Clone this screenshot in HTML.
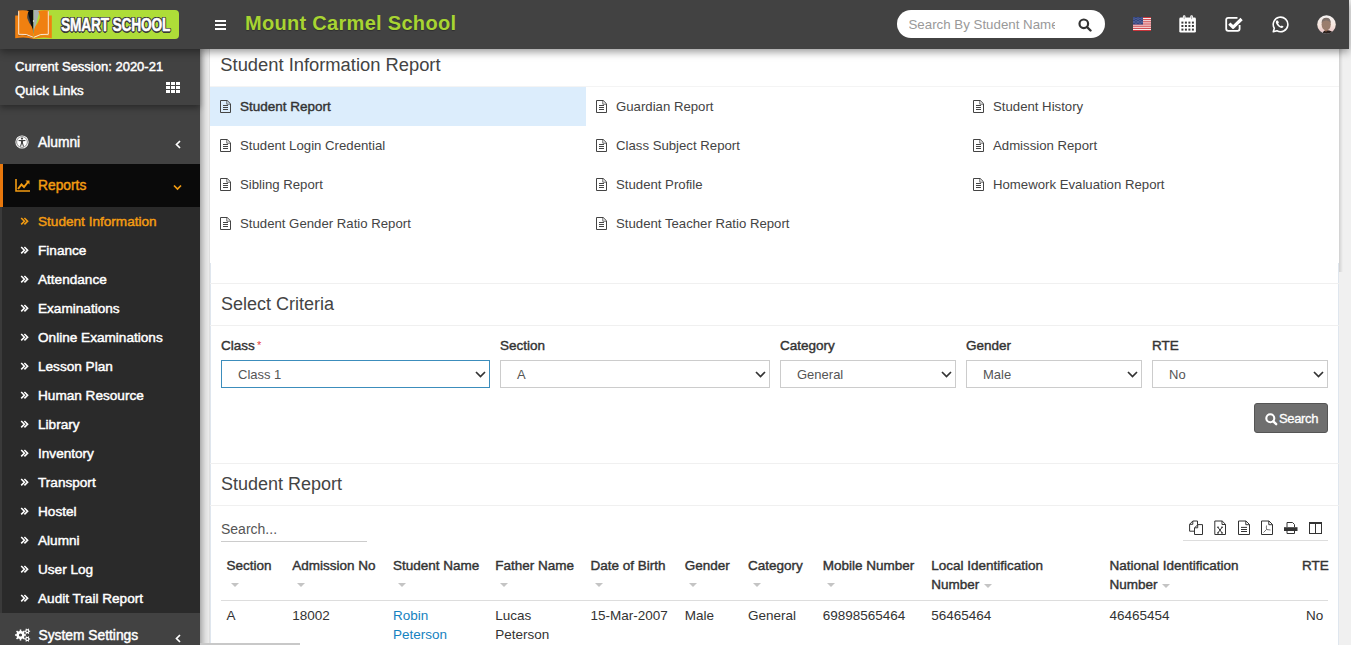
<!DOCTYPE html>
<html><head><meta charset="utf-8">
<style>
*{box-sizing:border-box;margin:0;padding:0}
html,body{width:1351px;height:645px;overflow:hidden}
body{position:relative;background:#f0f0f0;font-family:"Liberation Sans",sans-serif;color:#444}
.a{position:absolute;white-space:nowrap}
#hdr{position:absolute;left:0;top:0;width:1349px;height:49px;background:#424242;box-shadow:0 3px 8px rgba(0,0,0,.4);z-index:5}
#side{position:absolute;left:0;top:49px;width:200px;height:596px;background:#424242;z-index:4}
#content{position:absolute;left:210px;top:49px;width:1129px;height:596px;background:#fff}
.sb{font-size:13px;color:#fff;-webkit-text-stroke-width:.45px}
.sub{font-size:13.6px;color:#fff;-webkit-text-stroke-width:.45px}
.rl{font-size:13.2px;color:#444}
.ttl{font-size:18px;color:#444}
.lbl{font-size:13.5px;color:#333;-webkit-text-stroke-width:.4px}
.sel{position:absolute;top:311px;height:28px;border:1px solid #ccc;background:#fff}
.sel span{position:absolute;left:16px;top:6px;font-size:13px;color:#555}
.sel svg{position:absolute;right:4px;top:9px}
.th{font-size:13.5px;color:#333;-webkit-text-stroke-width:.4px}
.td{font-size:13.5px;color:#333}
.arr{position:absolute;width:0;height:0;border-left:4px solid transparent;border-right:4px solid transparent;border-top:4.5px solid #c4c4c4}
</style></head><body>

<div id="hdr">
  <!-- logo -->
  <div class="a" style="left:33px;top:10px;width:146px;height:29px;background:#aedd38;border-radius:0 4px 4px 0"></div>
  <svg class="a" style="left:15px;top:10px" width="37" height="29" viewBox="0 0 36.6 29">
    <path d="M12 0 H18.3 V24 Z" fill="#0d0d0d"/>
    <path d="M18.3 0 H24.6 L18.3 24 Z" fill="#a8b2b2"/>
    <circle cx="18.3" cy="11" r=".7" fill="#fff"/>
    <g id="lp">
    <path d="M0 5.5 L3 5.5 L3 25.5 Q11 24 18.3 28 L18.3 29 Q10 26.3 0 28.2 Z" fill="#f08010"/>
    <path d="M2.8 0.6 Q9 -0.3 13.5 1 Q11.5 5 12.2 8.5 Q13.5 12.5 16.5 16.5 Q18.3 20 18.3 27.5 Q11 23.8 2.8 25 Z" fill="#f08010"/>
    <path d="M3.5 1.2 V24.3 Q11.5 23.2 18 27.3" fill="none" stroke="#fff" stroke-width=".9" opacity=".9"/>
    </g>
    <g transform="translate(36.6 0) scale(-1 1)">
    <path d="M0 5.5 L3 5.5 L3 25.5 Q11 24 18.3 28 L18.3 29 Q10 26.3 0 28.2 Z" fill="#f08010"/>
    <path d="M2.8 0.6 Q9 -0.3 13.5 1 Q11.5 5 12.2 8.5 Q13.5 12.5 16.5 16.5 Q18.3 20 18.3 27.5 Q11 23.8 2.8 25 Z" fill="#f08010"/>
    <path d="M3.5 1.2 V24.3 Q11.5 23.2 18 27.3" fill="none" stroke="#fff" stroke-width=".9" opacity=".9"/>
    </g>
  </svg>
  <div class="a" style="left:60.5px;top:14px;font-size:19px;font-weight:bold;color:#fff;transform:scaleX(.725);transform-origin:0 0;letter-spacing:-.3px;-webkit-text-stroke:.5px #fff;text-shadow:-1.3px -1px 0 #3a3a3a,1.3px -1px 0 #3a3a3a,-1.3px 1px 0 #3a3a3a,1.3px 1px 0 #3a3a3a,0 1.5px 0 #3a3a3a,0 -1.3px 0 #3a3a3a,1.5px 0 0 #3a3a3a,-1.5px 0 0 #3a3a3a">SMART SCHOOL</div>
  <!-- hamburger -->
  <div class="a" style="left:215px;top:20px;width:11px;height:2px;background:#fff;box-shadow:0 4px 0 #fff,0 8px 0 #fff"></div>
  <div class="a" style="left:245px;top:12px;font-size:20px;font-weight:bold;letter-spacing:.3px;color:#a8d432;text-shadow:0 1px 1px rgba(0,0,0,.3)">Mount Carmel School</div>
  <!-- search -->
  <div class="a" style="left:897px;top:10px;width:208px;height:28px;background:#fff;border-radius:14px"></div>
  <div class="a" style="left:908.5px;top:16.8px;width:146.5px;overflow:hidden;font-size:13.3px;color:#999">Search By Student Name</div>
  <svg class="a" style="left:1078px;top:18px" width="14" height="14" viewBox="0 0 14 14"><circle cx="5.8" cy="5.8" r="4.3" fill="none" stroke="#333" stroke-width="2.2"/><path d="M9 9 L12.5 12.5" stroke="#333" stroke-width="2.4" stroke-linecap="round"/></svg>
  <!-- flag -->
  <svg class="a" style="left:1133px;top:17px" width="18" height="14" viewBox="0 0 18 14">
    <rect width="18" height="14" fill="#fff"/>
    <g fill="#c8343a"><rect y="0" width="18" height="1.1"/><rect y="2.15" width="18" height="1.1"/><rect y="4.3" width="18" height="1.1"/><rect y="6.45" width="18" height="1.1"/><rect y="8.6" width="18" height="1.1"/><rect y="10.75" width="18" height="1.1"/><rect y="12.9" width="18" height="1.1"/></g>
    <rect width="10" height="7.5" fill="#2d3f7c"/><circle cx="1.0" cy="1.0" r=".45" fill="#c8d0e8"/><circle cx="1.0" cy="2.6" r=".45" fill="#c8d0e8"/><circle cx="1.0" cy="4.2" r=".45" fill="#c8d0e8"/><circle cx="1.0" cy="5.8" r=".45" fill="#c8d0e8"/><circle cx="3.0" cy="1.8" r=".45" fill="#c8d0e8"/><circle cx="3.0" cy="3.4" r=".45" fill="#c8d0e8"/><circle cx="3.0" cy="5.0" r=".45" fill="#c8d0e8"/><circle cx="3.0" cy="6.6" r=".45" fill="#c8d0e8"/><circle cx="5.0" cy="1.0" r=".45" fill="#c8d0e8"/><circle cx="5.0" cy="2.6" r=".45" fill="#c8d0e8"/><circle cx="5.0" cy="4.2" r=".45" fill="#c8d0e8"/><circle cx="5.0" cy="5.8" r=".45" fill="#c8d0e8"/><circle cx="7.0" cy="1.8" r=".45" fill="#c8d0e8"/><circle cx="7.0" cy="3.4" r=".45" fill="#c8d0e8"/><circle cx="7.0" cy="5.0" r=".45" fill="#c8d0e8"/><circle cx="7.0" cy="6.6" r=".45" fill="#c8d0e8"/><circle cx="9.0" cy="1.0" r=".45" fill="#c8d0e8"/><circle cx="9.0" cy="2.6" r=".45" fill="#c8d0e8"/><circle cx="9.0" cy="4.2" r=".45" fill="#c8d0e8"/><circle cx="9.0" cy="5.8" r=".45" fill="#c8d0e8"/>
  </svg>
  <!-- calendar -->
  <svg class="a" style="left:1179px;top:15px" width="18" height="18" viewBox="0 0 18 18">
    <rect x="0.3" y="2.6" width="16.6" height="15" rx="1.4" fill="#fff"/>
    <rect x="3.9" y="0.2" width="2.6" height="4.6" rx="1.3" fill="#fff"/>
    <rect x="11.3" y="0.2" width="2.6" height="4.6" rx="1.3" fill="#fff"/>
    <path d="M5.2 1.2 V4.2 M12.6 1.2 V4.2" stroke="#777" stroke-width=".6"/>
    <g fill="#3a3a3a">
      <rect x="2.4" y="6.6" width="2" height="2"/><rect x="5.9" y="6.6" width="2" height="2"/><rect x="9.4" y="6.6" width="2" height="2"/><rect x="12.9" y="6.6" width="2" height="2"/>
      <rect x="2.4" y="10" width="2" height="2"/><rect x="5.9" y="10" width="2" height="2"/><rect x="9.4" y="10" width="2" height="2"/><rect x="12.9" y="10" width="2" height="2"/>
      <rect x="2.4" y="13.6" width="2" height="2"/><rect x="5.9" y="13.6" width="2" height="2"/><rect x="9.4" y="13.6" width="2" height="2"/><rect x="12.9" y="13.6" width="2" height="2"/>
    </g>
  </svg>
  <!-- checkbox -->
  <svg class="a" style="left:1225px;top:16px" width="18" height="16" viewBox="0 0 18 16">
    <path d="M12.5 1.8 H3.2 Q1.2 1.8 1.2 3.8 V12.8 Q1.2 14.8 3.2 14.8 H12.6 Q14.6 14.8 14.6 12.8 V9" fill="none" stroke="#fff" stroke-width="1.8"/>
    <path d="M4.3 7.6 L8.2 11.2 L16.6 3" fill="none" stroke="#fff" stroke-width="3.2" stroke-linejoin="round"/>
  </svg>
  <!-- whatsapp -->
  <svg class="a" style="left:1271px;top:16px" width="18" height="17" viewBox="0 0 18 17">
    <path d="M2.3 15.8 L3.3 12.2 A7.3 7.3 0 1 1 6 14.8 Z" fill="none" stroke="#fff" stroke-width="1.6" stroke-linejoin="round"/>
    <path d="M5.6 4.4 C4.5 5.2 4.6 6.8 5.7 8.5 C6.9 10.3 8.6 11.6 10.5 11.9 C11.6 12 12.4 11.3 12.5 10.5 L10.8 9.4 L9.9 10.2 C8.8 9.8 7.7 8.7 7.1 7.5 L7.9 6.5 L6.9 4.5 Z" fill="#fff"/>
  </svg>
  <!-- avatar -->
  <svg class="a" style="left:1317px;top:14.5px" width="19" height="19" viewBox="0 0 19 19">
    <defs><clipPath id="av"><circle cx="9.5" cy="9.5" r="9.3"/></clipPath>
    <linearGradient id="avg" x1="0" y1="0" x2="0" y2="1"><stop offset="0" stop-color="#f4f2f2"/><stop offset=".55" stop-color="#f6e6de"/><stop offset=".85" stop-color="#eccbcb"/><stop offset="1" stop-color="#c8d4e8"/></linearGradient></defs>
    <g clip-path="url(#av)">
      <rect width="19" height="19" fill="url(#avg)"/>
      <ellipse cx="9.2" cy="9.3" rx="4.6" ry="6.2" fill="#9a7e6e"/>
      <path d="M4.6 8 Q4.6 2.8 9.2 2.8 Q13.8 2.8 13.8 8 Q12.5 5.2 9.2 5.4 Q5.9 5.2 4.6 8 Z" fill="#7e706a"/>
      <path d="M5.5 19 Q6 15.5 9.5 15.2 Q15 15 17 19 Z" fill="#2a201c"/>
      <path d="M7.5 15.5 Q9 17.5 11 15.3 Z" fill="#b07a58"/>
    </g>
  </svg>
</div>

<div id="side">
  <div class="a" style="left:0;top:0;width:200px;height:56px;background:#424242;box-shadow:0 3px 6px rgba(0,0,0,.35)"></div>
  <div class="a sb" style="left:15px;top:10px">Current Session: 2020-21</div>
  <div class="a sb" style="left:15px;top:33.6px;font-size:13.3px">Quick Links</div>
  <svg class="a" style="left:166px;top:33px" width="14" height="11" viewBox="0 0 14 11"><g fill="#fff">
    <rect x="0" y="0" width="4" height="3"/><rect x="5" y="0" width="4" height="3"/><rect x="10" y="0" width="4" height="3"/>
    <rect x="0" y="4" width="4" height="3"/><rect x="5" y="4" width="4" height="3"/><rect x="10" y="4" width="4" height="3"/>
    <rect x="0" y="8" width="4" height="3"/><rect x="5" y="8" width="4" height="3"/><rect x="10" y="8" width="4" height="3"/></g></svg>

  <!-- Alumni -->
  <svg class="a" style="left:15px;top:86px" width="14" height="14" viewBox="0 0 14 14"><circle cx="7" cy="7" r="6.6" fill="#fff"/><circle cx="7" cy="7" r="5.4" fill="none" stroke="#424242" stroke-width=".6"/><circle cx="7" cy="3.6" r="1.1" fill="#424242"/><path d="M3.6 5 L10.4 5 L10.4 6 L8 6.2 L8 8 L9 11.4 L8 11.6 L7 8.6 L6 11.6 L5 11.4 L6 8 L6 6.2 L3.6 6 Z" fill="#424242"/></svg>
  <div class="a sb" style="left:38px;top:85.6px;font-size:13.8px">Alumni</div>
  <svg class="a" style="left:175px;top:91px" width="6" height="9" viewBox="0 0 6 9"><path d="M5 1 L1.5 4.5 L5 8" fill="none" stroke="#fff" stroke-width="1.7"/></svg>

  <!-- Reports -->
  <div class="a" style="left:0;top:115px;width:200px;height:43px;background:#0a0a0a"></div>
  <div class="a" style="left:0;top:115px;width:3px;height:43px;background:#e8780d"></div>
  <svg class="a" style="left:15px;top:130px" width="15" height="13" viewBox="0 0 15 13"><path d="M1 0 L1 12 L15 12" fill="none" stroke="#f39c12" stroke-width="1.6"/><path d="M3 10 L6.5 5.5 L9 8 L13 3" fill="none" stroke="#f39c12" stroke-width="2"/><path d="M10.5 1.5 L14.5 1.5 L14.5 5.5 Z" fill="#f39c12"/></svg>
  <div class="a sb" style="left:38px;top:128.6px;color:#f39c12;font-size:13.8px">Reports</div>
  <svg class="a" style="left:173px;top:135px" width="9" height="7" viewBox="0 0 9 7"><path d="M1 1.5 L4.5 5 L8 1.5" fill="none" stroke="#f39c12" stroke-width="1.7"/></svg>

  <!-- submenu -->
  <div class="a" style="left:0;top:158px;width:200px;height:406px;background:#2a2a2a;border-left:2px solid #3a3a3a"></div>
    <svg class="a" style="left:20px;top:168.3px" width="9" height="9" viewBox="0 0 9 9"><path d="M1.2 1 L4.4 4.2 L1.2 7.4 M4.4 1 L7.6 4.2 L4.4 7.4" fill="none" stroke="#f39c12" stroke-width="1.6"/></svg>
  <div class="a sub" style="left:38px;top:165.2px;color:#f39c12">Student Information</div>
  <svg class="a" style="left:20px;top:197.3px" width="9" height="9" viewBox="0 0 9 9"><path d="M1.2 1 L4.4 4.2 L1.2 7.4 M4.4 1 L7.6 4.2 L4.4 7.4" fill="none" stroke="#fff" stroke-width="1.6"/></svg>
  <div class="a sub" style="left:38px;top:194.2px;color:#fff">Finance</div>
  <svg class="a" style="left:20px;top:226.3px" width="9" height="9" viewBox="0 0 9 9"><path d="M1.2 1 L4.4 4.2 L1.2 7.4 M4.4 1 L7.6 4.2 L4.4 7.4" fill="none" stroke="#fff" stroke-width="1.6"/></svg>
  <div class="a sub" style="left:38px;top:223.2px;color:#fff">Attendance</div>
  <svg class="a" style="left:20px;top:255.3px" width="9" height="9" viewBox="0 0 9 9"><path d="M1.2 1 L4.4 4.2 L1.2 7.4 M4.4 1 L7.6 4.2 L4.4 7.4" fill="none" stroke="#fff" stroke-width="1.6"/></svg>
  <div class="a sub" style="left:38px;top:252.2px;color:#fff">Examinations</div>
  <svg class="a" style="left:20px;top:284.3px" width="9" height="9" viewBox="0 0 9 9"><path d="M1.2 1 L4.4 4.2 L1.2 7.4 M4.4 1 L7.6 4.2 L4.4 7.4" fill="none" stroke="#fff" stroke-width="1.6"/></svg>
  <div class="a sub" style="left:38px;top:281.2px;color:#fff">Online Examinations</div>
  <svg class="a" style="left:20px;top:313.3px" width="9" height="9" viewBox="0 0 9 9"><path d="M1.2 1 L4.4 4.2 L1.2 7.4 M4.4 1 L7.6 4.2 L4.4 7.4" fill="none" stroke="#fff" stroke-width="1.6"/></svg>
  <div class="a sub" style="left:38px;top:310.2px;color:#fff">Lesson Plan</div>
  <svg class="a" style="left:20px;top:342.3px" width="9" height="9" viewBox="0 0 9 9"><path d="M1.2 1 L4.4 4.2 L1.2 7.4 M4.4 1 L7.6 4.2 L4.4 7.4" fill="none" stroke="#fff" stroke-width="1.6"/></svg>
  <div class="a sub" style="left:38px;top:339.2px;color:#fff">Human Resource</div>
  <svg class="a" style="left:20px;top:371.3px" width="9" height="9" viewBox="0 0 9 9"><path d="M1.2 1 L4.4 4.2 L1.2 7.4 M4.4 1 L7.6 4.2 L4.4 7.4" fill="none" stroke="#fff" stroke-width="1.6"/></svg>
  <div class="a sub" style="left:38px;top:368.2px;color:#fff">Library</div>
  <svg class="a" style="left:20px;top:400.3px" width="9" height="9" viewBox="0 0 9 9"><path d="M1.2 1 L4.4 4.2 L1.2 7.4 M4.4 1 L7.6 4.2 L4.4 7.4" fill="none" stroke="#fff" stroke-width="1.6"/></svg>
  <div class="a sub" style="left:38px;top:397.2px;color:#fff">Inventory</div>
  <svg class="a" style="left:20px;top:429.3px" width="9" height="9" viewBox="0 0 9 9"><path d="M1.2 1 L4.4 4.2 L1.2 7.4 M4.4 1 L7.6 4.2 L4.4 7.4" fill="none" stroke="#fff" stroke-width="1.6"/></svg>
  <div class="a sub" style="left:38px;top:426.2px;color:#fff">Transport</div>
  <svg class="a" style="left:20px;top:458.3px" width="9" height="9" viewBox="0 0 9 9"><path d="M1.2 1 L4.4 4.2 L1.2 7.4 M4.4 1 L7.6 4.2 L4.4 7.4" fill="none" stroke="#fff" stroke-width="1.6"/></svg>
  <div class="a sub" style="left:38px;top:455.2px;color:#fff">Hostel</div>
  <svg class="a" style="left:20px;top:487.3px" width="9" height="9" viewBox="0 0 9 9"><path d="M1.2 1 L4.4 4.2 L1.2 7.4 M4.4 1 L7.6 4.2 L4.4 7.4" fill="none" stroke="#fff" stroke-width="1.6"/></svg>
  <div class="a sub" style="left:38px;top:484.2px;color:#fff">Alumni</div>
  <svg class="a" style="left:20px;top:516.3px" width="9" height="9" viewBox="0 0 9 9"><path d="M1.2 1 L4.4 4.2 L1.2 7.4 M4.4 1 L7.6 4.2 L4.4 7.4" fill="none" stroke="#fff" stroke-width="1.6"/></svg>
  <div class="a sub" style="left:38px;top:513.2px;color:#fff">User Log</div>
  <svg class="a" style="left:20px;top:545.3px" width="9" height="9" viewBox="0 0 9 9"><path d="M1.2 1 L4.4 4.2 L1.2 7.4 M4.4 1 L7.6 4.2 L4.4 7.4" fill="none" stroke="#fff" stroke-width="1.6"/></svg>
  <div class="a sub" style="left:38px;top:542.2px;color:#fff">Audit Trail Report</div>

  <!-- System settings -->
  <div class="a" style="left:0;top:564px;width:200px;height:32px;background:#424242"></div>
  <svg class="a" style="left:14.5px;top:578.5px" width="16" height="15" viewBox="0 0 16 15"><path d="M9.62 6.18 L11.05 6.23 L11.05 7.77 L9.62 7.82 L8.99 9.33 L9.96 10.38 L8.88 11.46 L7.83 10.49 L6.32 11.12 L6.27 12.55 L4.73 12.55 L4.68 11.12 L3.17 10.49 L2.12 11.46 L1.04 10.38 L2.01 9.33 L1.38 7.82 L-0.05 7.77 L-0.05 6.23 L1.38 6.18 L2.01 4.67 L1.04 3.62 L2.12 2.54 L3.17 3.51 L4.68 2.88 L4.73 1.45 L6.27 1.45 L6.32 2.88 L7.83 3.51 L8.88 2.54 L9.96 3.62 L8.99 4.67 Z M7.10 7.00 A1.6 1.6 0 1 0 3.90 7.00 A1.6 1.6 0 1 0 7.10 7.00 Z M14.33 2.66 L15.15 2.67 L15.15 3.73 L14.33 3.74 L13.78 4.68 L14.18 5.41 L13.27 5.93 L12.84 5.23 L11.76 5.23 L11.33 5.93 L10.42 5.41 L10.82 4.68 L10.27 3.74 L9.45 3.73 L9.45 2.67 L10.27 2.66 L10.82 1.72 L10.42 0.99 L11.33 0.47 L11.76 1.17 L12.84 1.17 L13.27 0.47 L14.18 0.99 L13.78 1.72 Z M13.20 3.20 A0.9 0.9 0 1 0 11.40 3.20 A0.9 0.9 0 1 0 13.20 3.20 Z M14.33 10.46 L15.15 10.47 L15.15 11.53 L14.33 11.54 L13.78 12.48 L14.18 13.21 L13.27 13.73 L12.84 13.03 L11.76 13.03 L11.33 13.73 L10.42 13.21 L10.82 12.48 L10.27 11.54 L9.45 11.53 L9.45 10.47 L10.27 10.46 L10.82 9.52 L10.42 8.79 L11.33 8.27 L11.76 8.97 L12.84 8.97 L13.27 8.27 L14.18 8.79 L13.78 9.52 Z M13.20 11.00 A0.9 0.9 0 1 0 11.40 11.00 A0.9 0.9 0 1 0 13.20 11.00 Z" fill="#fff" fill-rule="evenodd"/></svg>
  <div class="a sb" style="left:38.5px;top:578.8px;font-size:13.8px">System Settings</div>
  <svg class="a" style="left:175px;top:585px" width="6" height="9" viewBox="0 0 6 9"><path d="M5 1 L1.5 4.5 L5 8" fill="none" stroke="#fff" stroke-width="1.7"/></svg>
</div>

<!-- sidebar shadow onto content bg -->
<div class="a" style="left:200px;top:49px;width:10px;height:596px;background:linear-gradient(90deg,#adadad 0,#c6c6c6 2.5px,#dedede 5.5px,#eaeaea 8.5px,#d8d8d8 10px)"></div>

<div id="content"></div>
<div class="a" style="left:1339px;top:49px;width:4px;height:223px;background:linear-gradient(90deg,#d0d0d0,#f0f0f0)"></div>
<div class="a" style="left:210px;top:263px;width:1px;height:382px;background:#dfe6ee"></div>
<div class="a" style="left:1338px;top:263px;width:1px;height:382px;background:#dfe6ee"></div>
<div class="a" style="left:200px;top:643px;width:100px;height:2px;background:#c8c8c8"></div>
<div class="a ttl" style="left:220.3px;top:54.3px;font-size:18.35px">Student Information Report</div>
<div class="a" style="left:210px;top:86px;width:1129px;height:1px;background:#f4f4f4"></div>
<div class="a" style="left:210px;top:87px;width:376px;height:39px;background:#dcedfc"></div>
<svg class="a" style="left:220px;top:100px" width="11" height="13" viewBox="0 0 11 13"><path d="M0.5 0.5 H7.2 L10.5 3.8 V12.5 H0.5 Z" fill="none" stroke="#444" stroke-width="1"/><path d="M6.8 0.5 V4.2 H10.5" fill="none" stroke="#444" stroke-width=".8"/><path d="M3 5.5 H8 M3 7.5 H8 M3 9.5 H8" stroke="#444" stroke-width="1"/></svg>
<div class="a rl" style="left:240px;top:98.8px;color:#333;font-size:13.5px;-webkit-text-stroke-width:.4px">Student Report</div>
<svg class="a" style="left:596px;top:100px" width="11" height="13" viewBox="0 0 11 13"><path d="M0.5 0.5 H7.2 L10.5 3.8 V12.5 H0.5 Z" fill="none" stroke="#444" stroke-width="1"/><path d="M6.8 0.5 V4.2 H10.5" fill="none" stroke="#444" stroke-width=".8"/><path d="M3 5.5 H8 M3 7.5 H8 M3 9.5 H8" stroke="#444" stroke-width="1"/></svg>
<div class="a rl" style="left:616px;top:99.2px;">Guardian Report</div>
<svg class="a" style="left:973px;top:100px" width="11" height="13" viewBox="0 0 11 13"><path d="M0.5 0.5 H7.2 L10.5 3.8 V12.5 H0.5 Z" fill="none" stroke="#444" stroke-width="1"/><path d="M6.8 0.5 V4.2 H10.5" fill="none" stroke="#444" stroke-width=".8"/><path d="M3 5.5 H8 M3 7.5 H8 M3 9.5 H8" stroke="#444" stroke-width="1"/></svg>
<div class="a rl" style="left:993px;top:99.2px;">Student History</div>
<svg class="a" style="left:220px;top:139px" width="11" height="13" viewBox="0 0 11 13"><path d="M0.5 0.5 H7.2 L10.5 3.8 V12.5 H0.5 Z" fill="none" stroke="#444" stroke-width="1"/><path d="M6.8 0.5 V4.2 H10.5" fill="none" stroke="#444" stroke-width=".8"/><path d="M3 5.5 H8 M3 7.5 H8 M3 9.5 H8" stroke="#444" stroke-width="1"/></svg>
<div class="a rl" style="left:240px;top:138.2px;">Student Login Credential</div>
<svg class="a" style="left:596px;top:139px" width="11" height="13" viewBox="0 0 11 13"><path d="M0.5 0.5 H7.2 L10.5 3.8 V12.5 H0.5 Z" fill="none" stroke="#444" stroke-width="1"/><path d="M6.8 0.5 V4.2 H10.5" fill="none" stroke="#444" stroke-width=".8"/><path d="M3 5.5 H8 M3 7.5 H8 M3 9.5 H8" stroke="#444" stroke-width="1"/></svg>
<div class="a rl" style="left:616px;top:138.2px;">Class Subject Report</div>
<svg class="a" style="left:973px;top:139px" width="11" height="13" viewBox="0 0 11 13"><path d="M0.5 0.5 H7.2 L10.5 3.8 V12.5 H0.5 Z" fill="none" stroke="#444" stroke-width="1"/><path d="M6.8 0.5 V4.2 H10.5" fill="none" stroke="#444" stroke-width=".8"/><path d="M3 5.5 H8 M3 7.5 H8 M3 9.5 H8" stroke="#444" stroke-width="1"/></svg>
<div class="a rl" style="left:993px;top:138.2px;">Admission Report</div>
<svg class="a" style="left:220px;top:178px" width="11" height="13" viewBox="0 0 11 13"><path d="M0.5 0.5 H7.2 L10.5 3.8 V12.5 H0.5 Z" fill="none" stroke="#444" stroke-width="1"/><path d="M6.8 0.5 V4.2 H10.5" fill="none" stroke="#444" stroke-width=".8"/><path d="M3 5.5 H8 M3 7.5 H8 M3 9.5 H8" stroke="#444" stroke-width="1"/></svg>
<div class="a rl" style="left:240px;top:177.2px;">Sibling Report</div>
<svg class="a" style="left:596px;top:178px" width="11" height="13" viewBox="0 0 11 13"><path d="M0.5 0.5 H7.2 L10.5 3.8 V12.5 H0.5 Z" fill="none" stroke="#444" stroke-width="1"/><path d="M6.8 0.5 V4.2 H10.5" fill="none" stroke="#444" stroke-width=".8"/><path d="M3 5.5 H8 M3 7.5 H8 M3 9.5 H8" stroke="#444" stroke-width="1"/></svg>
<div class="a rl" style="left:616px;top:177.2px;">Student Profile</div>
<svg class="a" style="left:973px;top:178px" width="11" height="13" viewBox="0 0 11 13"><path d="M0.5 0.5 H7.2 L10.5 3.8 V12.5 H0.5 Z" fill="none" stroke="#444" stroke-width="1"/><path d="M6.8 0.5 V4.2 H10.5" fill="none" stroke="#444" stroke-width=".8"/><path d="M3 5.5 H8 M3 7.5 H8 M3 9.5 H8" stroke="#444" stroke-width="1"/></svg>
<div class="a rl" style="left:993px;top:177.2px;">Homework Evaluation Report</div>
<svg class="a" style="left:220px;top:217px" width="11" height="13" viewBox="0 0 11 13"><path d="M0.5 0.5 H7.2 L10.5 3.8 V12.5 H0.5 Z" fill="none" stroke="#444" stroke-width="1"/><path d="M6.8 0.5 V4.2 H10.5" fill="none" stroke="#444" stroke-width=".8"/><path d="M3 5.5 H8 M3 7.5 H8 M3 9.5 H8" stroke="#444" stroke-width="1"/></svg>
<div class="a rl" style="left:240px;top:216.2px;">Student Gender Ratio Report</div>
<svg class="a" style="left:596px;top:217px" width="11" height="13" viewBox="0 0 11 13"><path d="M0.5 0.5 H7.2 L10.5 3.8 V12.5 H0.5 Z" fill="none" stroke="#444" stroke-width="1"/><path d="M6.8 0.5 V4.2 H10.5" fill="none" stroke="#444" stroke-width=".8"/><path d="M3 5.5 H8 M3 7.5 H8 M3 9.5 H8" stroke="#444" stroke-width="1"/></svg>
<div class="a rl" style="left:616px;top:216.2px;">Student Teacher Ratio Report</div>
<div class="a" style="left:210px;top:283px;width:1129px;height:1px;background:#f0f0f0"></div>
<div class="a ttl" style="left:221px;top:293.7px">Select Criteria</div>
<div class="a" style="left:210px;top:325px;width:1129px;height:1px;background:#f0f0f0"></div>
<div class="a lbl" style="left:221px;top:337.8px">Class</div>
<div class="a lbl" style="left:500px;top:337.8px">Section</div>
<div class="a lbl" style="left:780px;top:337.8px">Category</div>
<div class="a lbl" style="left:966px;top:337.8px">Gender</div>
<div class="a lbl" style="left:1152px;top:337.8px">RTE</div>
<div class="a" style="left:257px;top:338.8px;font-size:11px;color:#e63c3c">*</div>
<div class="a" style="left:221px;top:360px;width:269px;height:28px;border:1px solid #3c8dbc;background:#fff"></div>
<div class="a" style="left:238px;top:367.2px;font-size:13px;color:#555">Class 1</div>
<svg class="a" style="left:475px;top:371px" width="11" height="7" viewBox="0 0 11 7"><path d="M1 1 L5.5 5.5 L10 1" fill="none" stroke="#333" stroke-width="1.7"/></svg>
<div class="a" style="left:500px;top:360px;width:270px;height:28px;border:1px solid #ccc;background:#fff"></div>
<div class="a" style="left:517px;top:367.2px;font-size:13px;color:#555">A</div>
<svg class="a" style="left:755px;top:371px" width="11" height="7" viewBox="0 0 11 7"><path d="M1 1 L5.5 5.5 L10 1" fill="none" stroke="#333" stroke-width="1.7"/></svg>
<div class="a" style="left:780px;top:360px;width:176px;height:28px;border:1px solid #ccc;background:#fff"></div>
<div class="a" style="left:797px;top:367.2px;font-size:13px;color:#555">General</div>
<svg class="a" style="left:941px;top:371px" width="11" height="7" viewBox="0 0 11 7"><path d="M1 1 L5.5 5.5 L10 1" fill="none" stroke="#333" stroke-width="1.7"/></svg>
<div class="a" style="left:966px;top:360px;width:176px;height:28px;border:1px solid #ccc;background:#fff"></div>
<div class="a" style="left:983px;top:367.2px;font-size:13px;color:#555">Male</div>
<svg class="a" style="left:1127px;top:371px" width="11" height="7" viewBox="0 0 11 7"><path d="M1 1 L5.5 5.5 L10 1" fill="none" stroke="#333" stroke-width="1.7"/></svg>
<div class="a" style="left:1152px;top:360px;width:176px;height:28px;border:1px solid #ccc;background:#fff"></div>
<div class="a" style="left:1169px;top:367.2px;font-size:13px;color:#555">No</div>
<svg class="a" style="left:1313px;top:371px" width="11" height="7" viewBox="0 0 11 7"><path d="M1 1 L5.5 5.5 L10 1" fill="none" stroke="#333" stroke-width="1.7"/></svg>
<div class="a" style="left:1254px;top:403px;width:74px;height:30px;background:#6f6f6f;border:1px solid #555;border-radius:3px"></div>
<svg class="a" style="left:1264.5px;top:412.5px" width="13" height="13" viewBox="0 0 13 13"><circle cx="5.3" cy="5.3" r="4" fill="none" stroke="#fff" stroke-width="2.1"/><path d="M8.3 8.3 L11.2 11.2" stroke="#fff" stroke-width="2.4" stroke-linecap="round"/></svg>
<div class="a" style="left:1279px;top:411.2px;font-size:13px;letter-spacing:-.35px;color:#fff;-webkit-text-stroke-width:.3px">Search</div>
<div class="a" style="left:210px;top:463px;width:1129px;height:1px;background:#f0f0f0"></div>
<div class="a ttl" style="left:221px;top:473.9px">Student Report</div>
<div class="a" style="left:210px;top:505px;width:1129px;height:1px;background:#f0f0f0"></div>
<div class="a" style="left:221px;top:521.3px;font-size:14px;color:#555">Search...</div>
<div class="a" style="left:221px;top:541px;width:146px;height:1px;background:#ccc"></div>
<svg class="a" style="left:1189px;top:520px" width="15" height="16" viewBox="0 0 15 16">
  <g fill="#fff" stroke="#333" stroke-width="1">
  <path d="M3.8 1 H8.5 V11.2 H0.6 V4.3 Z"/>
  <path d="M8.5 1 V4.3"/>
  <path d="M9 4.6 H13.5 V14.5 H5.5 V7.8 Z"/>
  </g>
  <path d="M0.6 4.3 H3.8 V1" fill="none" stroke="#333" stroke-width="1"/>
  <path d="M5.5 7.8 H8.7 V4.6" fill="none" stroke="#333" stroke-width="1"/>
</svg>
<svg class="a" style="left:1214px;top:520px" width="13" height="16" viewBox="0 0 13 16">
  <path d="M0.8 1 H8.2 L11.5 4.3 V14.5 H0.8 Z" fill="none" stroke="#333" stroke-width="1"/>
  <path d="M8 1 V4.5 H11.5" fill="none" stroke="#333" stroke-width="1"/>
  <path d="M3.8 7.2 L8.2 13 M8.2 7.2 L3.8 13 M3 7.2 H5 M7 7.2 H9 M3 13 H5 M7 13 H9" fill="none" stroke="#333" stroke-width="1"/>
</svg>
<svg class="a" style="left:1238px;top:520px" width="13" height="16" viewBox="0 0 13 16">
  <path d="M0.5 1 H8 L11.5 4.5 V14.5 H0.5 Z" fill="none" stroke="#333" stroke-width="1"/>
  <path d="M7.8 1 V4.7 H11.5" fill="none" stroke="#333" stroke-width="1"/>
  <path d="M3 7.4 H9 M3 9.5 H9 M3 11.5 H9" stroke="#333" stroke-width="1"/>
</svg>
<svg class="a" style="left:1261px;top:520px" width="13" height="16" viewBox="0 0 13 16">
  <path d="M0.5 1 H8 L11.5 4.5 V14.5 H0.5 Z" fill="none" stroke="#333" stroke-width="1"/>
  <path d="M7.8 1 V4.7 H11.5" fill="none" stroke="#333" stroke-width="1"/>
  <path d="M5.5 5.5 Q5 8.5 5.8 9.5 M2.5 12.5 L5.5 9.5 L9.5 10" fill="none" stroke="#555" stroke-width=".8"/>
</svg>
<svg class="a" style="left:1284px;top:521px" width="14" height="14" viewBox="0 0 14 14">
  <path d="M3 6 V1.5 H8.5 L10.5 3.5 V6" fill="none" stroke="#333" stroke-width="1"/>
  <rect x="0" y="6.2" width="13.5" height="3.8" fill="#333"/>
  <path d="M3 10 V12.5 H10.5 V10" fill="none" stroke="#333" stroke-width="1"/>
</svg>
<svg class="a" style="left:1309px;top:521px" width="13" height="14" viewBox="0 0 13 14">
  <rect x="0.5" y="1.5" width="12" height="11" fill="none" stroke="#333" stroke-width="1"/>
  <rect x="0" y="1" width="13" height="2" fill="#333"/>
  <path d="M6.5 2 V12.5" stroke="#333" stroke-width="1"/>
</svg>
<div class="a" style="left:1183px;top:540px;width:145px;height:1px;background:#ddd"></div>
<div class="a th" style="left:226.5px;top:558.2px">Section</div>
<div class="arr" style="left:231.0px;top:583px"></div>
<div class="a th" style="left:292.3px;top:558.2px">Admission No</div>
<div class="arr" style="left:296.8px;top:583px"></div>
<div class="a th" style="left:393px;top:558.2px">Student Name</div>
<div class="arr" style="left:398.3px;top:583px"></div>
<div class="a th" style="left:495.3px;top:558.2px">Father Name</div>
<div class="arr" style="left:499.8px;top:583px"></div>
<div class="a th" style="left:590.6px;top:558.2px">Date of Birth</div>
<div class="arr" style="left:595.1px;top:583px"></div>
<div class="a th" style="left:684.7px;top:558.2px">Gender</div>
<div class="arr" style="left:689.2px;top:583px"></div>
<div class="a th" style="left:748px;top:558.2px">Category</div>
<div class="arr" style="left:752.5px;top:583px"></div>
<div class="a th" style="left:822.7px;top:558.2px">Mobile Number</div>
<div class="arr" style="left:827.2px;top:583px"></div>
<div class="a th" style="left:931.2px;top:558.2px">Local Identification</div>
<div class="a th" style="left:931.2px;top:576.8px">Number</div>
<div class="arr" style="left:983.7px;top:583.5px"></div>
<div class="a th" style="left:1109.4px;top:558.2px">National Identification</div>
<div class="a th" style="left:1109.4px;top:576.8px">Number</div>
<div class="arr" style="left:1161.9px;top:583.5px"></div>
<div class="a th" style="left:1302px;top:558.2px">RTE</div>
<div class="a" style="left:221px;top:600px;width:1107px;height:1px;background:#ddd"></div>
<div class="a td" style="left:226.5px;top:607.8px">A</div>
<div class="a td" style="left:292.3px;top:607.8px">18002</div>
<div class="a td" style="left:495.3px;top:607.8px">Lucas</div>
<div class="a td" style="left:590.6px;top:607.8px">15-Mar-2007</div>
<div class="a td" style="left:684.7px;top:607.8px">Male</div>
<div class="a td" style="left:748px;top:607.8px">General</div>
<div class="a td" style="left:822.7px;top:607.8px">69898565464</div>
<div class="a td" style="left:931.2px;top:607.8px">56465464</div>
<div class="a td" style="left:1109.4px;top:607.8px">46465454</div>
<div class="a td" style="left:1306px;top:607.8px">No</div>
<div class="a td" style="left:495.3px;top:626.8px">Peterson</div>
<div class="a td" style="left:393px;top:607.8px;color:#1582c0">Robin</div>
<div class="a td" style="left:393px;top:626.8px;color:#1582c0">Peterson</div>

</body></html>
